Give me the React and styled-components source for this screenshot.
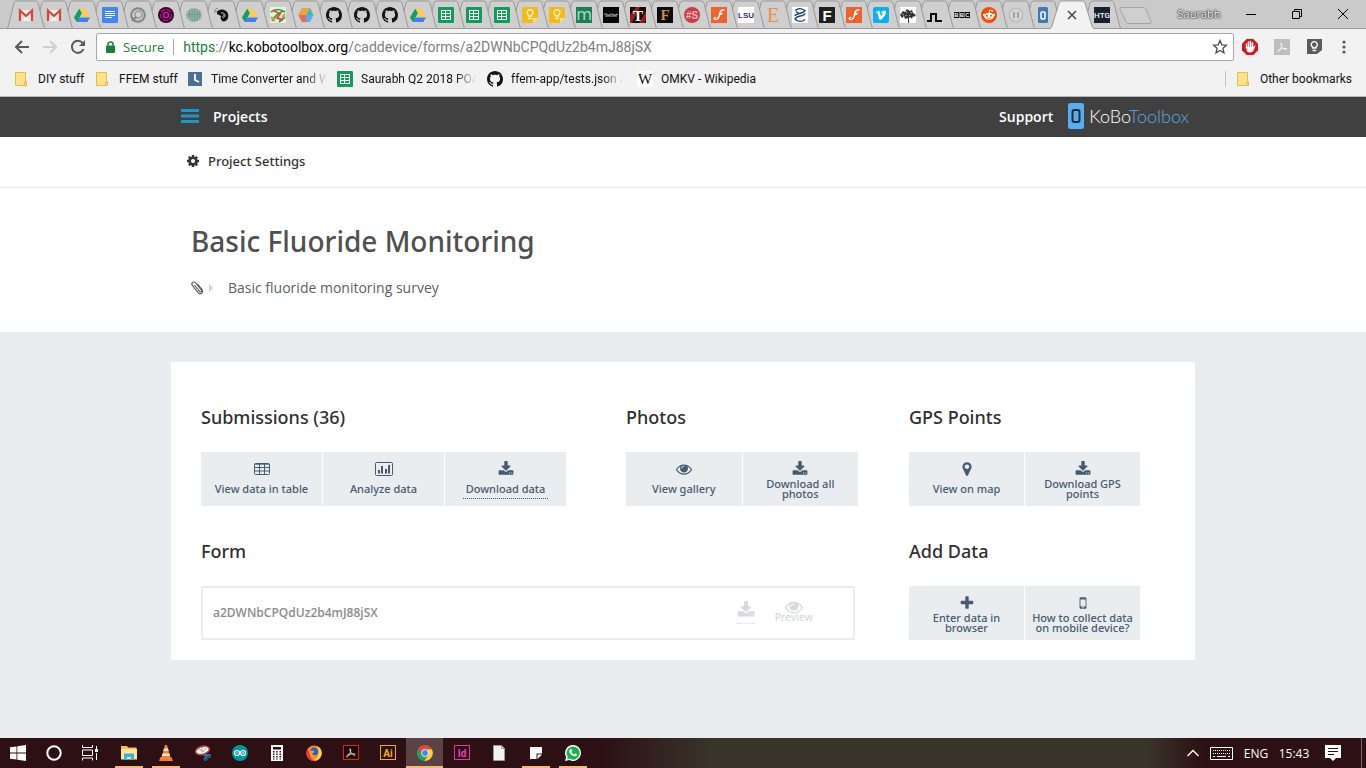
import React from "react";
import styled, { createGlobalStyle } from "styled-components";

const ui = `"Noto Sans", "Open Sans", sans-serif`;
const menu = `Roboto, "Open Sans", sans-serif`;
const body = `"Open Sans", "Noto Sans", sans-serif`;

const GlobalStyle = createGlobalStyle`
  * { box-sizing: border-box; }
  body { margin: 0; font-family: ${body}; background: #e9edf0; }
  a { color: inherit; text-decoration: none; }
  button { border: 0; padding: 0; background: none; color: inherit; font: inherit; cursor: pointer; }
  svg { display: block; flex: none; }
  h1, h2, p { margin: 0; }
`;

/* ---------- Glyphs ---------- */

const faPaths = {
  download:
    "M1344 1344q0-26-19-45t-45-19-45 19-19 45 19 45 45 19 45-19 19-45zm256 0q0-26-19-45t-45-19-45 19-19 45 19 45 45 19 45-19 19-45zm128-224v320q0 40-28 68t-68 28h-1472q-40 0-68-28t-28-68v-320q0-40 28-68t68-28h465l135 136q58 56 136 56t136-56l136-136h464q40 0 68 28t28 68zm-325-569q17 41-14 70l-448 448q-18 19-45 19t-45-19l-448-448q-31-29-14-70 17-39 59-39h256v-448q0-26 19-45t45-19h256q26 0 45 19t19 45v448h256q42 0 59 39z",
  eye:
    "M1664 960q-152-236-381-353 61 104 61 225 0 185-131.5 316.5t-316.5 131.5-316.5-131.5-131.5-316.5q0-121 61-225-229 117-381 353 133 205 333.5 326.5t434.5 121.5 434.5-121.5 333.5-326.5zm-720-384q0-20-14-34t-34-14q-125 0-214.5 89.5t-89.5 214.5q0 20 14 34t34 14 34-14 14-34q0-86 61-147t147-61q20 0 34-14t14-34zm848 384q0 34-20 69-140 230-376.5 368.5t-499.5 138.5-499.5-139-376.5-368q-20-35-20-69t20-69q140-229 376.5-368t499.5-139 499.5 139 376.5 368q20 35 20 69z",
  cog:
    "M1152 896q0-106-75-181t-181-75-181 75-75 181 75 181 181 75 181-75 75-181zm512-109v222q0 12-8 23t-20 13l-185 28q-19 54-39 91 35 50 107 138 10 12 10 25t-9 23q-27 37-99 108t-94 71q-12 0-26-9l-138-108q-44 23-91 38-16 136-29 186-7 28-36 28h-222q-14 0-24.5-8.5t-11.5-21.5l-28-184q-49-16-90-37l-141 107q-10 9-25 9-14 0-25-11-126-114-165-168-7-10-7-23 0-12 8-23 15-21 51-66.5t54-70.5q-27-50-41-99l-183-27q-13-2-21-12.5t-8-23.5v-222q0-12 8-23t19-13l186-28q14-46 39-92-40-57-107-138-10-12-10-24 0-10 9-23 26-36 98.5-107.5t94.5-71.5q13 0 26 10l138 107q44-23 91-38 16-136 29-186 7-28 36-28h222q14 0 24.5 8.5t11.5 21.5l28 184q49 16 90 37l142-107q9-9 24-9 13 0 25 10 129 119 165 170 7 8 7 22 0 12-8 23-15 21-51 66.5t-54 70.5q26 50 41 98l183 28q13 2 21 12.5t8 23.5z",
  marker:
    "M1152 640q0-106-75-181t-181-75-181 75-75 181 75 181 181 75 181-75 75-181zm256 0q0 109-33 179l-364 774q-16 33-47.5 52t-67.5 19-67.5-19-46.5-52l-365-774q-33-70-33-179 0-212 150-362t362-150 362 150 150 362z",
  plus:
    "M1600 736v192q0 40-28 68t-68 28h-416v416q0 40-28 68t-68 28h-192q-40 0-68-28t-28-68v-416h-416q-40 0-68-28t-28-68v-192q0-40 28-68t68-28h416v-416q0-40 28-68t68-28h192q40 0 68 28t28 68v416h416q40 0 68 28t28 68z",
  mobile:
    "M976 1408q0-33-23.5-56.5t-56.5-23.5-56.5 23.5-23.5 56.5 23.5 56.5 56.5 23.5 56.5-23.5 23.5-56.5zm208-160v-704q0-13-9.5-22.5t-22.5-9.5h-512q-13 0-22.5 9.5t-9.5 22.5v704q0 13 9.5 22.5t22.5 9.5h512q13 0 22.5-9.5t9.5-22.5zm-192-848q0-16-16-16h-160q-16 0-16 16t16 16h160q16 0 16-16zm288-16v1024q0 52-38 90t-90 38h-512q-52 0-90-38t-38-90v-1024q0-52 38-90t90-38h512q52 0 90 38t38 90z",
};

const Fa = ({ name, size = 16 }) => (
  <svg width={size} height={size} viewBox="0 0 1792 1792" fill="currentColor" aria-hidden="true">
    <path d={faPaths[name]} />
  </svg>
);

const TableIcon = () => (
  <svg width="16" height="14" viewBox="0 0 16 14" fill="none" stroke="currentColor" aria-hidden="true">
    <rect x=".5" y="1.500" width="15" height="11" rx="1" />
    <path d="M1 2.200h14M1 5.500h14M1 9h14M5.500 2v10.500M10.500 2v10.500" />
  </svg>
);

const ChartIcon = () => (
  <svg width="18" height="14" viewBox="0 0 18 14" aria-hidden="true">
    <rect x=".5" y=".5" width="17" height="13" rx="1" fill="none" stroke="currentColor" />
    <path fill="currentColor" d="M3 8h2v3.500H3zM6 4h2v7.500H6zM10 7h2v4.500h-2zM13 3h2v8.500h-2z" />
  </svg>
);

const github =
  "M8 0C3.580 0 0 3.580 0 8c0 3.540 2.290 6.530 5.470 7.590.4.070.550-.170.550-.380 0-.190-.010-.820-.010-1.490-2.010.370-2.530-.490-2.690-.940-.090-.230-.480-.940-.820-1.130-.280-.150-.680-.520-.010-.530.630-.010 1.080.580 1.230.820.720 1.210 1.870.870 2.330.660.070-.520.280-.870.510-1.070-1.780-.200-3.640-.890-3.640-3.950 0-.870.310-1.590.820-2.150-.080-.200-.360-1.020.080-2.120 0 0 .670-.210 2.200.820.640-.180 1.320-.270 2-.270s1.360.090 2 .270c1.530-1.040 2.200-.820 2.200-.820.440 1.100.160 1.920.080 2.120.510.560.820 1.270.820 2.150 0 3.070-1.870 3.750-3.650 3.950.290.250.540.730.540 1.480 0 1.070-.010 1.930-.010 2.200 0 .210.150.460.550.380A8.010 8.010 0 0 0 16 8c0-4.420-3.580-8-8-8z";

const Letter = ({ bg, fg, size = 12, font = "Liberation Sans", weight = 700, y = 12.5, round = 0, children }) => (
  <>
    <rect width="16" height="16" rx={round} fill={bg} />
    <text x="8" y={y} fill={fg} textAnchor="middle" fontFamily={font} fontSize={size} fontWeight={weight}>
      {children}
    </text>
  </>
);

const jScript = (
  <>
    <rect width="16" height="16" fill="#f1622b" />
    <path d="M13 3C10 2.500 9 4.500 8.500 7.500 8 10.500 6.500 12.800 4 12.500 2.800 12.300 3 10.500 4.500 10.500M8.500 7.500Q10 7.500 11 6.500" fill="none" stroke="#fff" strokeWidth="1.500" strokeLinecap="round" />
  </>
);

const glyphs = {
  gmail: (
    <>
      <rect x="1" y="3" width="14" height="11" fill="#efefef" />
      <path d="M2 14V3.500L8 9l6-5.500V14" fill="none" stroke="#dc4437" strokeWidth="2.200" />
      <path d="M4 13l3-4M12 13L9 9" stroke="#d2d2d2" />
    </>
  ),
  drive: (
    <>
      <path fill="#129f5b" d="M5.300 1.500 8 6 2.700 15 0 10.500z" />
      <path fill="#fdcc48" d="M5.300 1.500h5.400L16 10.500h-5.400z" />
      <path fill="#4081ec" d="M5.300 10.500H16L13.300 15H2.700z" />
    </>
  ),
  docs: (
    <>
      <rect width="16" height="16" rx="1" fill="#4285f4" />
      <path d="M3 4.500h10M3 6.500h10M3 8.500h10M3 10.500h7" stroke="#fff" />
    </>
  ),
  sheets: (
    <>
      <rect width="16" height="16" rx="1" fill="#109d59" />
      <path fill="#fff" d="M3 3h10v10H3z" />
      <path fill="#109d59" d="M4 4h3v2H4zM8 4h4v2H8zM4 7h3v2H4zM8 7h4v2H8zM4 10h3v2H4zM8 10h4v2H8z" />
    </>
  ),
  loop: (
    <>
      <circle cx="8" cy="8" r="6.800" fill="none" stroke="#858585" strokeWidth="2" />
      <circle cx="8.500" cy="7.500" r="3.500" fill="none" stroke="#9a9a9a" strokeWidth="1.500" />
      <path d="M2 14l4-4" stroke="#858585" strokeWidth="2" />
    </>
  ),
  magenta: (
    <>
      <circle cx="8" cy="8" r="8" fill="#35042b" />
      <circle cx="8" cy="8" r="5.500" fill="none" stroke="#b00f8c" strokeWidth="1.400" strokeDasharray="5 1.500" />
      <circle cx="8" cy="8" r="2.600" fill="none" stroke="#d3209f" strokeWidth="1.400" />
    </>
  ),
  brain: (
    <>
      <ellipse cx="8" cy="8" rx="8" ry="6.800" fill="#8fb5a0" />
      <path d="M3.500 3v8M6 1.500v13M8.500 1.500v13M11 2v12M13.500 4v7M1 7.500h14" stroke="#6b9980" strokeWidth=".8" />
    </>
  ),
  bird: (
    <>
      <path fill="none" stroke="#777" d="M1 6q-1-4 3-5M2 4l3 1" />
      <path fill="#111" d="M3 5c1-2 4-3 7-2 4 1 5 5 4 8s-4 4-6 3c-1-2-2-3-1-5L3 7z" />
      <path d="M7 6c4-1 4 3 1 4M10 7c2 1 1 3-1 4" stroke="#ddd" fill="none" strokeWidth=".9" />
    </>
  ),
  map: (
    <>
      <rect width="16" height="16" fill="#e7f1da" />
      <path d="M1 5q7-5 14 0M2 14Q5 8 13 4M9 15l6-5" stroke="#2f9a48" strokeWidth="1.700" fill="none" />
      <path d="M3 3l7 4-3 4 6 2" stroke="#cf5240" strokeWidth="2" fill="none" />
      <path d="M1 10l4 4M12 10l3-3" stroke="#c8a440" strokeWidth="2" />
    </>
  ),
  hex: (
    <>
      <path fill="#e8685c" d="M4 1h4L4.500 8 8 15H4L.5 8z" />
      <path fill="#f5a03e" d="M4 1h8l-4 7H.5z" />
      <path fill="#3cbd9a" d="M12 1l3.500 7H8z" />
      <path fill="#5badea" d="M8 8h7.500L12 15H8z" />
      <path fill="#e8685c" d="M.5 8H8v7H4z" />
    </>
  ),
  github: <path fill="#161514" d={github} />,
  keep: (
    <>
      <path fill="#f6b91c" d="M1 0h14a1 1 0 0 1 1 1v10l-5 5H1a1 1 0 0 1-1-1V1a1 1 0 0 1 1-1z" />
      <path fill="#fde293" d="M16 11l-5 5v-5z" />
      <path d="M6.500 9V8.200a3 3 0 1 1 3 0V9z" fill="none" stroke="#fff6cf" strokeWidth="1.300" />
      <path d="M6 11.500h4" stroke="#fff6cf" strokeWidth="1.300" />
    </>
  ),
  medium: <Letter bg="#1b7f55" fg="#a6e3c5" size={17} y={13} weight={400} font="Open Sans">m</Letter>,
  black: (
    <>
      <rect width="16" height="16" fill="#050505" />
      <path d="M1 7.500q1.500-1.500 3 0t3 0 3 0 5-.5M2 9h12" stroke="#c9c9c9" fill="none" strokeWidth=".9" />
    </>
  ),
  tRed: (
    <>
      <rect width="16" height="16" fill="#160705" />
      <path d="M0 16V8L6 0h4L2 16zM9 16l7-12v8l-2 4z" fill="#8f2019" />
      <text x="8" y="13.500" fill="#fff" textAnchor="middle" fontFamily="Liberation Serif" fontSize="15" fontWeight="700">T</text>
    </>
  ),
  fBlack: <Letter bg="#0c0908" fg="#c98a4c" size={15} y={13} font="Liberation Serif">F</Letter>,
  hashS: <Letter bg="#cb3c47" fg="#f3b5b5" size={10} y={11.5} round={8}>#S</Letter>,
  j: jScript,
  lsu: <Letter bg="#fff" fg="#461d7c" size={8} y={11}>LSU</Letter>,
  etsy: (
    <text x="8" y="15" fill="#ee8f3f" textAnchor="middle" fontFamily="Liberation Serif" fontSize="20">E</text>
  ),
  swirl: (
    <>
      <rect width="16" height="16" fill="#fff" />
      <path d="M3 3.500C6 1 10 1.500 13 3.500 10 8 3 6 3 9M13 6.500C12 10 5 8 3 12 6 15 10 15 13 12.500M4 4.500q2 2 4 2" fill="none" stroke="#1f4668" strokeWidth="1.400" />
    </>
  ),
  fWhite: <Letter bg="#1e1f21" fg="#fff" size={15} y={13.5}>F</Letter>,
  vimeo: (
    <>
      <rect width="16" height="16" rx="2" fill="#08b2f0" />
      <path fill="#fff" d="M3 5.500c1.500-1.500 3.500-3 4-.5.300 1.500.5 3.800 1.200 3.800.8 0 2.200-2.500 1-2.800-.5-.1-.8.100-1 .3.800-3.200 5-3.600 4.800-1C12.800 8 9 13 7.300 13 5.500 13 5.200 7 4.600 6.300c-.2-.2-.8.100-1 .2z" />
    </>
  ),
  tree: (
    <>
      <path fill="#fff" d="M0 0h16v16H0z" />
      <path fill="#30322e" d="M0 8l3-4 2 1 2-3 3 2 2-1 1 3 3 2-2 2-1-1-1 3-2-2-1 1v5H8v-5L5 12l-1-3-2 2z" />
      <path d="M2 7l2 1M6 4l1 2M10 5l2 1M5 9l2-1M9 8l1 1" stroke="#ccc" strokeWidth=".8" />
    </>
  ),
  pulse: <path d="M0 14h4V7h5v7h6" fill="none" stroke="#0d0d0d" strokeWidth="2" />,
  bbc: (
    <>
      <path fill="#000" d="M0 5h5v6H0zM5.500 5h5v6h-5zM11 5h5v6h-5z" />
      <text x="2.500" y="10" fill="#fff" textAnchor="middle" fontFamily="Liberation Sans" fontSize="6" fontWeight="700">B</text>
      <text x="8" y="10" fill="#fff" textAnchor="middle" fontFamily="Liberation Sans" fontSize="6" fontWeight="700">B</text>
      <text x="13.500" y="10" fill="#fff" textAnchor="middle" fontFamily="Liberation Sans" fontSize="6" fontWeight="700">C</text>
    </>
  ),
  reddit: (
    <>
      <circle cx="8" cy="8" r="8" fill="#ff4500" />
      <ellipse cx="8" cy="9.300" rx="5" ry="3.500" fill="#fff" />
      <circle cx="3.200" cy="8" r="1.300" fill="#fff" />
      <circle cx="12.800" cy="8" r="1.300" fill="#fff" />
      <path d="M8 6l.7-3 2.300.6" fill="none" stroke="#fff" />
      <circle cx="11.300" cy="3.700" r="1" fill="#fff" />
      <circle cx="6" cy="8.700" r="1" fill="#ff4500" />
      <circle cx="10" cy="8.700" r="1" fill="#ff4500" />
      <path d="M6 11q2 1 4 0" fill="none" stroke="#ff4500" strokeWidth=".7" />
    </>
  ),
  pause: (
    <>
      <circle cx="8" cy="8" r="6.800" fill="#d6d6d6" stroke="#bcbcbc" strokeWidth="1.500" />
      <path d="M6 5v6M10 5v6" stroke="#9a9a9a" strokeWidth="1.700" />
    </>
  ),
  kobo: (
    <>
      <rect x="3" width="10" height="16" rx="1.500" fill="#3d79b3" />
      <rect x="6" y="5" width="4" height="7" rx="1" fill="none" stroke="#fff" strokeWidth="1.500" />
    </>
  ),
  htg: <Letter bg="#16222f" fg="#fff" size={8} y={11} font="Roboto" weight={500}>HTG</Letter>,
  clock: (
    <>
      <rect x="1" y="1" width="14" height="14" fill="#4c7093" />
      <path d="M8 3v6l4 2" fill="none" stroke="#fff" strokeWidth="1.800" />
    </>
  ),
  wiki: <Letter bg="#fff" fg="#111" size={15} y={13} font="Liberation Serif" weight={400} round={2}>W</Letter>,
  folder: (
    <>
      <path fill="#ffe289" stroke="#e4bd46" d="M1.500 1.500h10v9h1v4h-11z" />
      <path fill="#ffe289" stroke="#e4bd46" d="M10.500 14.500v-3h2v3z" />
    </>
  ),
  windows: <path fill="#fff" d="M0 2.300 6.500 1.400v6.200H0zM7.300 1.300 16 0v7.600H7.300zM0 8.400h6.500v6.200L0 13.700zM7.300 8.400H16V16l-8.700-1.200z" />,
  cortana: <circle cx="8" cy="8" r="6.700" fill="none" stroke="#fff" strokeWidth="2" />,
  taskview: (
    <>
      <path d="M.5 0v2.500h10V0M.5 15.500V13h10v2.500M.5 5h10v5.500H.5zM14.500 1v3M14.500 8v7" fill="none" stroke="#fff" />
      <path fill="#fff" d="M13 4h3v3h-3z" />
    </>
  ),
  explorer: (
    <>
      <path fill="#f4c445" d="M0 1h6l1 1.500h8.500V7H0z" />
      <path fill="#ffe69a" d="M0 4h16v10.500H0z" />
      <path fill="#3ab0e8" d="M3 8.500h10V15h-3v-3H6v3H3z" />
    </>
  ),
  vlc: (
    <>
      <path fill="#f58220" d="M2.500 12h11l1.500 4H1z" />
      <path fill="#f58220" d="M7 0h2l3.500 13h-9z" />
      <path fill="#e6e6e6" d="M6 3.500h4l.8 2.500H5.200zM4.500 8.500h7l.7 2.500H3.800z" />
    </>
  ),
  snip: (
    <>
      <ellipse cx="7.500" cy="5.500" rx="7" ry="4" fill="#eee" stroke="#c13a3a" strokeWidth="1.500" transform="rotate(-15 7 5.500)" />
      <path d="M7 2v4M4 4l4 3M11 3L8 7" stroke="#a9a9a9" />
      <path d="M8 10h7M11 9v5" stroke="#2b7cc2" strokeWidth="1.500" />
      <circle cx="14" cy="11" r="1.500" fill="none" stroke="#2b7cc2" />
      <circle cx="10.500" cy="14" r="1.500" fill="none" stroke="#2b7cc2" />
    </>
  ),
  arduino: (
    <>
      <circle cx="8" cy="8" r="8" fill="#00979c" />
      <circle cx="5" cy="8" r="2.500" fill="none" stroke="#fff" strokeWidth="1.200" />
      <circle cx="11" cy="8" r="2.500" fill="none" stroke="#fff" strokeWidth="1.200" />
      <path d="M4 8h2M10 8h2M11 7v2" stroke="#fff" strokeWidth=".7" />
    </>
  ),
  calc: (
    <>
      <path fill="#fff" d="M2 0h12v16H2z" />
      <path fill="#2d1014" d="M4 2h8v2.500H4zM4 6h1.500v1.500H4zM7.200 6h1.500v1.500H7.200zM10.500 6H12v1.500h-1.500zM4 8.500h1.500V10H4zM7.200 8.500h1.500V10H7.200zM10.500 8.500H12V10h-1.500zM4 11h1.500v1.500H4zM7.200 11h1.500v1.500H7.200zM10.500 11H12v1.500h-1.500zM4 13.500h1.500V14.500H4zM7.200 13.500h1.500v1H7.200zM10.500 13.500H12v1h-1.500z" />
    </>
  ),
  firefox: (
    <>
      <circle cx="8" cy="8.300" r="7.700" fill="#ff8a16" />
      <path fill="#ffd43c" d="M11 1c5 2 6 8 3 12-2 2.500-5 3-7 2 5-1 7-7 4-14z" />
      <path fill="#e23b3f" d="M1 4c-2 6 2 12 8 12-4-2-6-5-5-9z" />
      <circle cx="8" cy="6.800" r="4.300" fill="#2e5fce" />
      <path fill="#ff9a1f" d="M3 6c2-1 3 0 5 0 1 1-1 2-2 3 2 2 4 2 6 0-1 4-9 4-9-3z" />
    </>
  ),
  acrobat: (
    <>
      <rect x=".5" y=".5" width="15" height="14" fill="#1e0808" stroke="#e12018" />
      <path d="M3.500 11.500C3 10 7 8.500 12.500 9M7 3.500C6.500 5 8 9.500 12 10.500M7.500 4C8.500 7 5.500 12 3.500 12" fill="none" stroke="#ded5d3" />
    </>
  ),
  ai: (
    <>
      <rect x=".5" y=".5" width="15" height="14" fill="#2a1206" stroke="#f7a53a" />
      <text x="8" y="11.500" fill="#f9a83c" textAnchor="middle" fontFamily="Roboto" fontSize="10" fontWeight="700">Ai</text>
    </>
  ),
  chrome: (
    <>
      <path fill="#dd4b3e" d="M1.100 4A8 8 0 0 1 15 4.300H8L5 10z" />
      <path fill="#1da462" d="M1.100 4A8 8 0 0 0 7.300 16L11 10H5z" />
      <path fill="#ffcd41" d="M14.900 4.300A8 8 0 0 1 7.300 16L11.200 10 10 4.300z" />
      <circle cx="8" cy="8" r="3.700" fill="#fff" />
      <circle cx="8" cy="8" r="2.900" fill="#4688f1" />
    </>
  ),
  id: (
    <>
      <rect x=".5" y=".5" width="15" height="14" fill="#2b0719" stroke="#e0389a" />
      <text x="8" y="11.500" fill="#e94aa5" textAnchor="middle" fontFamily="Roboto" fontSize="10" fontWeight="700">Id</text>
    </>
  ),
  page: (
    <>
      <path fill="#f3f4f6" stroke="#9b9b9b" d="M2.500.5h8l3 3v12h-11z" />
      <path fill="none" stroke="#9b9b9b" d="M10.500.5v3h3" />
    </>
  ),
  sticky: <path fill="#fff" d="M2 2h12v6.500H8.500V14H2zM14 9.500 9.500 14V9.500z" />,
  whatsapp: (
    <>
      <path fill="#fff" d="M8 0a8 8 0 1 1-3.700 15.100L0 16l1.100-4A8 8 0 0 1 8 0z" />
      <path fill="#17b24b" d="M8 1.400a6.600 6.600 0 1 1-3.400 12.200L2 14.200l.7-2.500A6.600 6.600 0 0 1 8 1.400z" />
      <path fill="#fff" d="M5.500 4.200c.8-.4 1.200 0 1.700 1.600l-.7 1.100c.6 1.200 1.400 2 2.600 2.500l1-1c1.500.5 2 .9 1.800 1.600-.5 1.300-2 1.700-3.500 1.100-2.300-.9-3.700-2.500-4.100-4.300-.2-1.100.3-2 1.200-2.600z" />
    </>
  ),
};

const Glyph = ({ name, size = 16 }) => (
  <svg width={size} height={size} viewBox="0 0 16 16" aria-hidden="true">
    {glyphs[name]}
  </svg>
);

/* ---------- Browser chrome ---------- */

const Window = styled.div`
  min-height: 100vh;
  display: flex;
  flex-direction: column;
`;

const TabStrip = styled.nav`
  display: flex;
  height: 29px;
  padding-left: 12px;
  background: #cacaca;
  box-shadow: inset 0 -1px #999;
  overflow: hidden;
`;

const Tab = styled.button`
  display: grid;
  grid-template: 100% / 100%;
  place-items: center;
  flex: none;
  width: ${(p) => p.$width}px;
  height: 29px;
  z-index: ${(p) => p.$layer};
  > svg { grid-area: 1 / 1; overflow: visible; }
`;

const tabs = [
  "gmail", "gmail", "drive", "docs", "loop", "magenta", "brain", "bird", "drive", "map", "hex",
  "github", "github", "github", "drive", "sheets", "sheets", "sheets", "keep", "keep", "medium",
  "black", "tRed", "fBlack", "hashS", "j", "lsu", "etsy", "swirl", "fWhite", "j", "vimeo", "tree",
  "pulse", "bbc", "reddit", "pause", "kobo", "active", "htg",
];

const TabShape = ({ active }) =>
  active ? (
    <svg width="44" height="29" viewBox="0 0 44 29" aria-hidden="true">
      <path d="M0 29Q1 28.500 2 26L9 3q.8-2 2.500-2h21q1.700 0 2.500 2l7 23q1 2.500 2 3z" fill="#f2f2f2" />
      <path d="M0 28.500q1-.5 2-2.500L9 3q.8-2 2.500-2h21q1.700 0 2.500 2l7 23q1 2 2 2.500" fill="none" stroke="#999" />
    </svg>
  ) : (
    <svg width="40" height="29" viewBox="0 0 40 29" aria-hidden="true">
      <path d="M.5 28.500q1-.5 1.800-2.500L8 3q.8-2 2.500-2h19q1.700 0 2.500 2l5.700 23q.8 2 1.800 2.500z" fill="#cfcfcf" stroke="#999" />
    </svg>
  );

const NewTab = styled.button`
  margin-left: 3px;
  height: 29px;
`;

const WindowControls = styled.div`
  display: flex;
  margin-left: auto;
  align-items: center;
  height: 27px;
`;

const Profile = styled.button`
  width: 58px;
  font: 11px ${body};
  color: #f4f4f4;
  text-shadow: 0 0 1px #333, 0 0 2px #333, 0 0 2px #333;
`;

const Control = styled.button`
  display: grid;
  place-items: center;
  width: 46px;
  height: 27px;
`;

const Toolbar = styled.div`
  display: flex;
  align-items: center;
  height: 35px;
  padding: 0 14px;
  background: #f2f2f2;
`;

const NavButton = styled.button`
  width: 16px;
  margin-right: 12px;
`;

const Omnibox = styled.div`
  flex: 1;
  display: flex;
  align-items: center;
  height: 28px;
  margin: 1px 8px 0 -2px;
  padding: 0 5px 0 9px;
  border: 1px solid #a9a9a9;
  border-radius: 2px;
  background: #fff;
  font: 14px ${menu};
`;

const Secure = styled.button`
  display: flex;
  align-items: center;
  gap: 8px;
  height: 16px;
  padding-right: 9px;
  border-right: 1px solid #aaa;
  font: 13px ${body};
  color: #1b8038;
`;

const Address = styled.div`
  flex: 1;
  padding-left: 9px;
  color: #808080;
  outline: 0;
  em { font-style: normal; color: #1b8038; }
  b { font-weight: 400; color: #000; }
`;

const Extensions = styled.div`
  display: flex;
  align-items: center;
  gap: 16px;
  padding-right: 2px;
`;

const Bookmarks = styled.nav`
  display: flex;
  align-items: center;
  height: 33px;
  padding: 0 14px 2px;
  background: #f2f2f2;
  border-bottom: 1px solid #b6b6b6;
  font: 12px ${menu};
  color: #111;
`;

const Bookmark = styled.a`
  display: flex;
  align-items: center;
  gap: 8px;
  width: ${(p) => p.$width}px;
  white-space: nowrap;
`;

const BookmarkName = styled.span`
  ${(p) => p.$fade && "mask-image: linear-gradient(to left, transparent 3px, #000 24px);"}
`;

const OtherBookmarks = styled.a`
  display: flex;
  align-items: center;
  gap: 8px;
  margin-left: auto;
  padding-left: 10px;
  border-left: 1px solid #c4c4c4;
`;

/* ---------- Page ---------- */

const Page = styled.main`
  flex: 1;
  background: #e9edf0;
  padding-bottom: 30px;
`;

const Container = styled.div`
  display: flex;
  align-items: center;
  max-width: 1024px;
  margin: 0 auto;
`;

const Header = styled.header`
  background: #404040;
  color: #fff;
  font-size: 14px;
  font-weight: 600;
  ${Container} { height: 40px; padding: 0 6px 2px 10px; }
`;

const MenuButton = styled.button`
  display: flex;
  align-items: center;
  gap: 14px;
`;

const SupportLink = styled.a`
  margin-left: auto;
`;

const Logo = styled.a`
  display: flex;
  align-items: center;
  gap: 4px;
  margin-left: 14px;
  font-family: Lato, "Open Sans", sans-serif;
  font-size: 18px;
  font-weight: 300;
  span span { color: #5ba9e6; }
`;

const SettingsBar = styled.div`
  background: #fff;
  border-bottom: 1px solid #e6e6e6;
  ${Container} { height: 50px; padding: 0 15px; }
`;

const SettingsLink = styled.a`
  display: flex;
  align-items: center;
  gap: 8px;
  padding-bottom: 2px;
  font: 500 13px ${ui};
  color: #333;
`;

const Intro = styled.section`
  background: #fff;
  padding: 33px 0 33px;
  ${Container} { display: block; padding: 0 20px; }
`;

const Title = styled.h1`
  font: 500 28px/40px ${ui};
  color: #505050;
`;

const Description = styled.div`
  display: flex;
  align-items: center;
  margin-top: 16px;
  font-size: 14px;
  line-height: 22px;
  color: #606060;
  p { margin-left: 15px; }
`;

const Card = styled.section`
  display: flex;
  flex-wrap: wrap;
  align-items: flex-start;
  column-gap: 51px;
  max-width: 1024px;
  margin: 30px auto 0;
  padding: 40px 55px 20px 30px;
  background: #fff;
`;

const Main = styled.div`
  flex: 657 1 0;
  display: grid;
  grid-template-columns: 365fr 232fr;
  gap: 30px 60px;
`;

const Side = styled.div`
  flex: 231 1 0;
  display: grid;
  gap: 30px;
`;

const Group = styled.section`
  ${(p) => p.$wide && "grid-column: 1 / -1; margin-right: 3px;"}
`;

const Heading = styled.h2`
  margin-bottom: 20px;
  font: 500 18px/30px ${ui};
  color: #303030;
`;

const Actions = styled.div`
  display: grid;
  grid-auto-flow: column;
  grid-auto-columns: minmax(0, 1fr);
  gap: 1px;
`;

const Action = styled.a`
  display: flex;
  flex-direction: column;
  align-items: center;
  height: 54px;
  padding-top: 8px;
  background: #e9edf0;
  color: #475a6e;
`;

const ActionIcon = styled.span`
  display: grid;
  place-items: center;
  height: 17px;
`;

const ActionLabel = styled.span`
  display: grid;
  place-items: center;
  height: 24px;
  font: 500 11px/10px ${ui};
  text-align: center;
  white-space: nowrap;
`;

const MenuLabel = styled(ActionLabel)`
  height: 22px;
  padding: 3px 3px 0;
  border-bottom: 1px dotted #475a6e;
`;

const FormBox = styled.div`
  display: flex;
  align-items: center;
  height: 54px;
  padding: 0 40px 2px 10px;
  border: 2px solid #e9edf0;
  font-size: 12px;
  font-weight: 600;
  color: #8c8c8c;
`;

const FormDownload = styled.button`
  margin-left: auto;
  border-bottom: 1px dotted #d5dadf;
  padding-bottom: 4px;
  color: #d5dadf;
`;

const Preview = styled.a`
  display: grid;
  justify-items: center;
  margin-left: 20px;
  padding-bottom: 4px;
  font-size: 10px;
  line-height: 10px;
  font-weight: 600;
  color: #d5dadf;
  svg { margin-bottom: -4px; }
`;

/* ---------- Taskbar ---------- */

const Taskbar = styled.footer`
  display: flex;
  height: 30px;
  background: linear-gradient(90deg, #2d1014 44%, #38342a 52%, #38342a 84%, #2d1014 88%);
  color: #fff;
`;

const Task = styled.button`
  display: grid;
  place-items: center;
  width: ${(p) => (p.$pinned ? 37 : 36)}px;
  background: ${(p) => (p.$current ? "#5a4245" : "none")};
  &::after {
    content: "";
    width: ${(p) => (p.$current ? 37 : 28)}px;
    height: 2px;
    align-self: end;
    grid-area: 1 / 1;
    background: ${(p) => (p.$open || p.$current ? "#f8b67e" : "transparent")};
  }
  svg { grid-area: 1 / 1; }
`;

const Apps = styled.div`
  display: flex;
  margin-left: 2px;
`;

const Tray = styled.div`
  display: flex;
  align-items: center;
  margin-left: auto;
  font: 12px ${body};
`;

const TrayItem = styled.button`
  display: grid;
  place-items: center;
  height: 28px;
  width: ${(p) => p.$width}px;
`;

const Notifications = styled(TrayItem)`
  padding-right: 10px;
`;

const ShowDesktop = styled.button`
  width: 5px;
  height: 30px;
  border-left: 1px solid #7c6a6c;
`;

const apps = [
  ["explorer", "File Explorer", true], ["vlc", "VLC", true], ["snip", "Snipping Tool"], ["arduino", "Arduino"],
  ["calc", "Calculator"], ["firefox", "Firefox"], ["acrobat", "Acrobat"], ["ai", "Illustrator"],
  ["chrome", "Chrome"], ["id", "InDesign"], ["page", "Notepad"], ["sticky", "Sticky Notes", true],
  ["whatsapp", "WhatsApp", true],
];

const ActionLink = ({ icon, menu: hasMenu, children }) => {
  const Label = hasMenu ? MenuLabel : ActionLabel;
  return (
    <Action href="#">
      <ActionIcon>{icon}</ActionIcon>
      <Label><span>{children}</span></Label>
    </Action>
  );
};

const BrowserChrome = () => (
  <>
    <TabStrip aria-label="Tabs">
      {tabs.map((name, i) => (
        <Tab
          key={i}
          aria-label={name}
          $width={name === "active" ? 32 : i < 18 ? 28 : 27}
          $layer={name === "active" ? 60 : 50 - i}
        >
          <TabShape active={name === "active"} />
          {name === "active" ? (
            <svg width="16" height="16" viewBox="0 0 16 16" aria-hidden="true">
              <path d="M4 4l8 8M12 4l-8 8" stroke="#444" strokeWidth="1.500" />
            </svg>
          ) : (
            <Glyph name={name} />
          )}
        </Tab>
      ))}
      <NewTab aria-label="New tab">
        <svg width="36" height="29" viewBox="0 0 36 29" aria-hidden="true">
          <path d="M3 7.500h22q2 0 3 2l5 12q.8 2-1 2H11q-2 0-3-2L2 9.500q-.8-2 1-2z" fill="#cfcfcf" stroke="#a5a5a5" />
        </svg>
      </NewTab>
      <WindowControls>
        <Profile>Saurabh</Profile>
        <Control aria-label="Minimize">
          <svg width="12" height="12"><path d="M1 6.500h10" stroke="#000" /></svg>
        </Control>
        <Control aria-label="Restore">
          <svg width="12" height="12" fill="none" stroke="#000"><path d="M1.500 3.500h7v7h-7zM3.500 3.500v-2h7v7h-2" /></svg>
        </Control>
        <Control aria-label="Close">
          <svg width="12" height="12"><path d="M1 1l10 10M11 1L1 11" stroke="#000" /></svg>
        </Control>
      </WindowControls>
    </TabStrip>
    <Toolbar>
      <NavButton aria-label="Back">
        <svg width="16" height="16" fill="none" stroke="#5a5a5a" strokeWidth="2"><path d="M15 8H2M8 2L2 8l6 6" /></svg>
      </NavButton>
      <NavButton aria-label="Forward">
        <svg width="16" height="16" fill="none" stroke="#d0d0d0" strokeWidth="2"><path d="M1 8h13M8 2l6 6-6 6" /></svg>
      </NavButton>
      <NavButton aria-label="Reload">
        <svg width="16" height="16" fill="none" stroke="#5a5a5a" strokeWidth="2"><path d="M13.500 10A6 6 0 1 1 12.500 4" /><path d="M15 1v6H9z" fill="#5a5a5a" stroke="none" /></svg>
      </NavButton>
      <Omnibox>
        <Secure>
          <svg width="9" height="12" viewBox="0 0 9 12" aria-hidden="true">
            <path d="M2 5V3q0-2 2.500-2T7 3v2" fill="none" stroke="#1b8038" strokeWidth="1.500" />
            <rect y="4.500" width="9" height="7.500" rx="1" fill="#1b8038" />
          </svg>
          Secure
        </Secure>
        <Address role="textbox" aria-label="Address" contentEditable suppressContentEditableWarning spellCheck={false}>
          <em>https</em>://<b>kc.kobotoolbox.org</b>/caddevice/forms/a2DWNbCPQdUz2b4mJ88jSX
        </Address>
        <button aria-label="Bookmark this page">
          <svg width="16" height="16" viewBox="0 0 16 16" fill="none" stroke="#4d4d4d" strokeWidth="1.300">
            <path d="M8 1.500l1.800 4.300 4.700.4-3.600 3 1.100 4.600L8 11.400l-4 2.400 1.100-4.600-3.600-3 4.700-.4z" />
          </svg>
        </button>
      </Omnibox>
      <Extensions>
        <button aria-label="Ad blocker">
          <svg width="16" height="16" viewBox="0 0 16 16">
            <path d="M4.700 0h6.600L16 4.700v6.600L11.300 16H4.700L0 11.300V4.700z" fill="#e01018" />
            <path d="M4.500 9V5M6.500 8V3M8.500 8V2.500M10.500 8V4" stroke="#fff" strokeWidth="1.500" strokeLinecap="round" />
            <path d="M4 8h7.300l1.500-1.500q1 0 .5 1L11 12.500Q8 14.500 5 12.500z" fill="#fff" />
          </svg>
        </button>
        <button aria-label="Acrobat">
          <svg width="16" height="16" viewBox="0 0 16 16">
            <rect width="16" height="16" fill="#bdbdbd" />
            <path d="M3.500 12.500C3 11 7 9 13 9.500M7 3.500C6.500 5 8 10 12.500 11M7.500 4C8.500 7 5.500 13 3.500 13" fill="none" stroke="#f2f2f2" />
          </svg>
        </button>
        <button aria-label="Keep">
          <svg width="16" height="16" viewBox="0 0 16 16">
            <path fill="#5b5b5b" d="M1 0h15v11l-5 4H1z" />
            <path d="M6.800 9V8.200a3 3 0 1 1 3 0V9z" fill="none" stroke="#fff" strokeWidth="1.400" />
            <path d="M6.500 11.500h3.600" stroke="#fff" strokeWidth="1.400" />
          </svg>
        </button>
        <button aria-label="Menu">
          <svg width="12" height="16" fill="#5a5a5a"><circle cx="6" cy="3" r="1.600" /><circle cx="6" cy="8" r="1.600" /><circle cx="6" cy="13" r="1.600" /></svg>
        </button>
      </Extensions>
    </Toolbar>
    <Bookmarks aria-label="Bookmarks">
      <Bookmark href="#" $width={81}><Glyph name="folder" /><BookmarkName>DIY stuff</BookmarkName></Bookmark>
      <Bookmark href="#" $width={92}><Glyph name="folder" /><BookmarkName>FFEM stuff</BookmarkName></Bookmark>
      <Bookmark href="#" $width={150}><Glyph name="clock" /><BookmarkName $fade>Time Converter and W</BookmarkName></Bookmark>
      <Bookmark href="#" $width={150}><Glyph name="sheets" /><BookmarkName $fade>Saurabh Q2 2018 POA</BookmarkName></Bookmark>
      <Bookmark href="#" $width={150}><Glyph name="github" /><BookmarkName $fade>ffem-app/tests.json a</BookmarkName></Bookmark>
      <Bookmark href="#" $width={140}><Glyph name="wiki" /><BookmarkName>OMKV - Wikipedia</BookmarkName></Bookmark>
      <OtherBookmarks href="#"><Glyph name="folder" /><span>Other bookmarks</span></OtherBookmarks>
    </Bookmarks>
  </>
);

export default function App() {
  return (
    <Window>
      <GlobalStyle />
      <BrowserChrome />
      <Page>
        <Header>
          <Container>
            <MenuButton>
              <svg width="18" height="14" fill="#2095c9" aria-hidden="true"><path d="M0 0h18v3H0zM0 5.500h18v3H0zM0 11h18v3H0z" /></svg>
              Projects
            </MenuButton>
            <SupportLink href="#">Support</SupportLink>
            <Logo href="#">
              <svg width="18" height="28" viewBox="0 0 18 28" aria-hidden="true">
                <rect x="1" y="1" width="16" height="26" rx="2" fill="#58adf0" />
                <rect x="5.500" y="8" width="7" height="12" rx="2" fill="none" stroke="#202a33" strokeWidth="2" />
              </svg>
              <span>KoBo<span>Toolbox</span></span>
            </Logo>
          </Container>
        </Header>
        <SettingsBar>
          <Container>
            <SettingsLink href="#"><Fa name="cog" size={14} />Project Settings</SettingsLink>
          </Container>
        </SettingsBar>
        <Intro>
          <Container>
            <Title>Basic Fluoride Monitoring</Title>
            <Description>
              <svg width="12" height="14" viewBox="0 0 12 14" fill="none" stroke="#5b5b62" strokeWidth="1.100" aria-hidden="true">
                <path d="M3.500 4l4.800 6.200q1 1.300 1.900.5t-.1-2.100L4.700 1.900Q3.200.3 1.600 1.500T1.300 4.300l5.500 7q2 2.400 3.800 1T11 8.500L6.500 3" />
              </svg>
              <svg width="10" height="10" viewBox="0 0 10 10" aria-hidden="true"><path d="M6 1v8l4-4z" fill="#d0d0d0" /></svg>
              <p>Basic fluoride monitoring survey</p>
            </Description>
          </Container>
        </Intro>
        <Card>
          <Main>
            <Group>
              <Heading>Submissions (36)</Heading>
              <Actions>
                <ActionLink icon={<TableIcon />}>View data in table</ActionLink>
                <ActionLink icon={<ChartIcon />}>Analyze data</ActionLink>
                <ActionLink menu icon={<Fa name="download" />}>Download data</ActionLink>
              </Actions>
            </Group>
            <Group>
              <Heading>Photos</Heading>
              <Actions>
                <ActionLink icon={<Fa name="eye" />}>View gallery</ActionLink>
                <ActionLink icon={<Fa name="download" />}>Download all<br />photos</ActionLink>
              </Actions>
            </Group>
            <Group $wide>
              <Heading>Form</Heading>
              <FormBox>
                a2DWNbCPQdUz2b4mJ88jSX
                <FormDownload aria-label="Download form"><Fa name="download" size={18} /></FormDownload>
                <Preview href="#"><Fa name="eye" size={18} />Preview</Preview>
              </FormBox>
            </Group>
          </Main>
          <Side>
            <Group>
              <Heading>GPS Points</Heading>
              <Actions>
                <ActionLink icon={<Fa name="marker" />}>View on map</ActionLink>
                <ActionLink icon={<Fa name="download" />}>Download GPS<br />points</ActionLink>
              </Actions>
            </Group>
            <Group>
              <Heading>Add Data</Heading>
              <Actions>
                <ActionLink icon={<Fa name="plus" />}>Enter data in<br />browser</ActionLink>
                <ActionLink icon={<Fa name="mobile" />}>How to collect data<br />on mobile device?</ActionLink>
              </Actions>
            </Group>
          </Side>
        </Card>
      </Page>
      <Taskbar>
        <Task aria-label="Start"><Glyph name="windows" /></Task>
        <Task aria-label="Search"><Glyph name="cortana" /></Task>
        <Task aria-label="Task view"><Glyph name="taskview" /></Task>
        <Apps>
          {apps.map(([name, label, open]) => (
            <Task key={name} aria-label={label} $pinned $open={open} $current={name === "chrome"}>
              <Glyph name={name} />
            </Task>
          ))}
        </Apps>
        <Tray>
          <TrayItem aria-label="Show hidden icons" $width={20}>
            <svg width="12" height="8" fill="none" stroke="#fff" strokeWidth="1.300"><path d="M.5 7L6 1.500 11.500 7" /></svg>
          </TrayItem>
          <TrayItem aria-label="Keyboard" $width={36}>
            <svg width="23" height="13" fill="none" stroke="#fff">
              <path d="M.5.5h22v12H.5z" />
              <path d="M3 3.500h17M3 6.500h17" strokeDasharray="1 1" />
              <path d="M3 9.500h2M7 9.500h9M18 9.500h2" />
            </svg>
          </TrayItem>
          <TrayItem $width={34}>ENG</TrayItem>
          <TrayItem $width={42}>15:43</TrayItem>
          <Notifications aria-label="Notifications" $width={46}>
            <svg width="16" height="16" viewBox="0 0 16 16">
              <path d="M0 0h16v13h-5l-3 3-3-3H0z" fill="#fff" />
              <path d="M3 3.500h10M3 6.500h10M3 9.500h6" stroke="#2d1014" />
            </svg>
          </Notifications>
          <ShowDesktop aria-label="Show desktop" />
        </Tray>
      </Taskbar>
    </Window>
  );
}
